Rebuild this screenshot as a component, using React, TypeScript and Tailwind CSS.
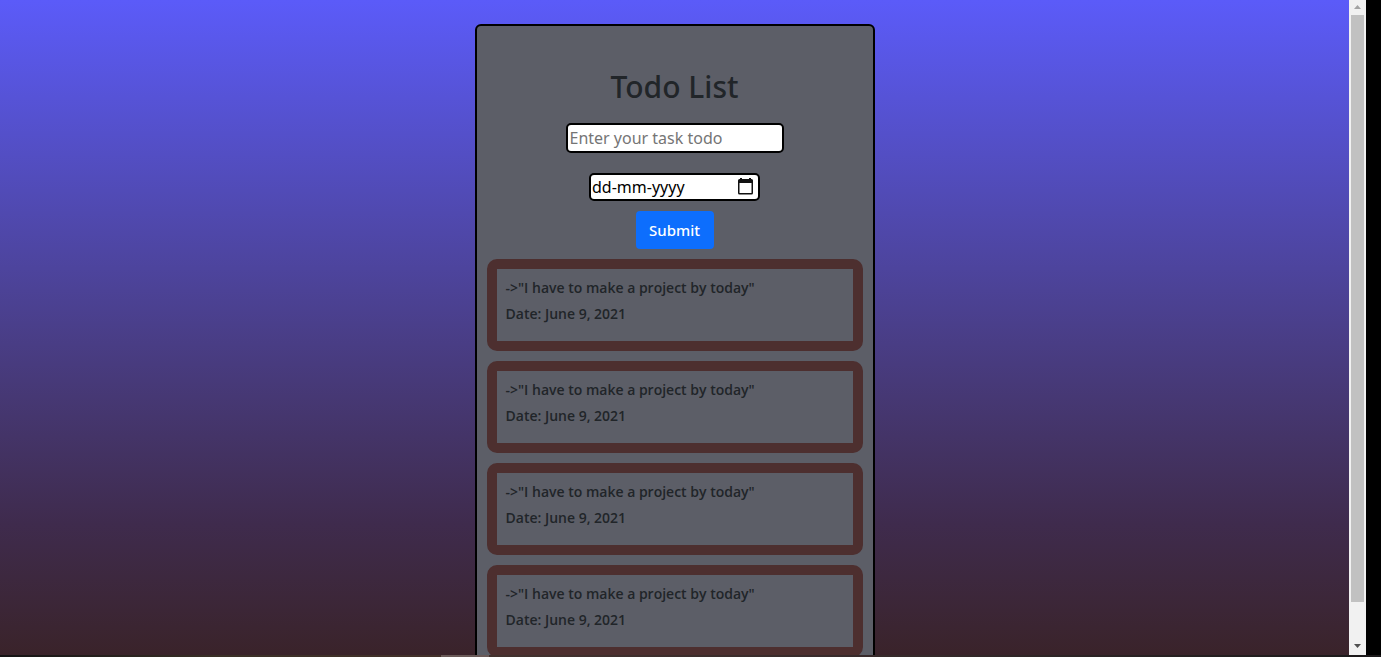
import { useState } from 'react';

type Todo = { id: number; task: string; date: string };

const todos: Todo[] = [1, 2, 3, 4].map((id) => ({
  id,
  task: 'I have to make a project by today',
  date: 'June 9, 2021',
}));

function CalendarIcon() {
  return (
    <svg viewBox="0 0 15 17" className="h-[17px] w-[15px]" aria-hidden="true">
      <path d="M2 0h2v2H2zM11 0h2v2h-2z" fill="#111" />
      <path d="M1.500 1h12A1.500 1.500 0 0 1 15 2.500v12.500a1.500 1.500 0 0 1-1.500 1.500h-12A1.500 1.500 0 0 1 0 15V2.500A1.500 1.500 0 0 1 1.500 1zM1.500 5v10h12V5z" fill="#111" fillRule="evenodd" />
    </svg>
  );
}

function TodoItem({ todo }: { todo: Todo }) {
  return (
    <li className="h-[92px] shrink-0 rounded-[10px] border-10 border-[#4d2f2f] px-[9px] py-1.5 font-['Open_Sans',sans-serif] text-[14px] leading-[26px] font-semibold text-[#212529]">
      <p>-&gt;"{todo.task}"</p>
      <p>Date: {todo.date}</p>
    </li>
  );
}

function ScrollRail() {
  return (
    <div className="flex w-[17px] shrink-0 flex-col items-center bg-[#f1f1f1]" aria-hidden="true">
      <svg viewBox="0 0 17 15" className="h-[15px] w-[17px] shrink-0">
        <path d="M5 9h7L8.500 5z" fill="#a3a3a3" />
      </svg>
      <div className="w-[13px] grow bg-[#c1c1c1]" />
      <div className="h-9 shrink-0" />
      <svg viewBox="0 0 17 17" className="h-[17px] w-[17px] shrink-0">
        <path d="M5 6h7L8.500 10z" fill="#505050" />
      </svg>
    </div>
  );
}

export default function App() {
  const [task, setTask] = useState('');
  const [date, setDate] = useState('');

  return (
    <div className="flex h-screen flex-col overflow-hidden bg-black font-['Noto_Sans',sans-serif]">
      <div className="flex min-h-0 grow pr-[15px]">
        <main className="min-w-0 grow overflow-hidden bg-linear-to-b from-[#5b5bf9] via-[#3f2b4d] via-80% to-[#3a232a] pt-6">
          <section className="mx-auto flex w-full max-w-[400px] flex-col rounded-md border-2 border-black bg-[#5c5e67] px-2.5 pt-10 pb-2.5">
            <h1 className="mb-[15px] text-center text-[30px] leading-[42px] font-medium text-[#212529]">Todo List</h1>
            <form className="flex flex-col items-center" onSubmit={(e) => e.preventDefault()}>
              <input
                type="text"
                aria-label="Task"
                placeholder="Enter your task todo"
                value={task}
                onChange={(e) => setTask(e.target.value)}
                className="mb-5 h-[30px] w-[218px] rounded-[5px] border-2 border-black bg-white px-0.5 text-base text-black placeholder:text-[#757575]"
              />
              <div className="mb-2.5 flex h-7 w-[171px] items-center rounded-[5px] border-2 border-black bg-white pr-[5px] pl-px">
                <input
                  type="text"
                  aria-label="Due date"
                  placeholder="dd-mm-yyyy"
                  value={date}
                  onChange={(e) => setDate(e.target.value)}
                  className="h-6 min-w-0 grow text-base text-black outline-none placeholder:text-black"
                />
                <button type="button" aria-label="Open calendar" className="pb-0.5">
                  <CalendarIcon />
                </button>
              </div>
              <button type="submit" className="mb-2.5 h-[38px] w-[78px] rounded bg-[#0d6efd] text-[15px] font-medium text-white">
                Submit
              </button>
            </form>
            <ul className="flex flex-col gap-2.5">
              {todos.map((todo) => (
                <TodoItem key={todo.id} todo={todo} />
              ))}
            </ul>
          </section>
        </main>
        <ScrollRail />
      </div>
      <div className="flex h-0.5 shrink-0" aria-hidden="true">
        <div className="w-[441px] bg-linear-to-r from-[#151314] via-[#3b3027] to-[#43302a]" />
        <div className="w-12 bg-[#6a5a58]" />
        <div className="grow bg-linear-to-r from-[#43322e] via-[#35292a] to-[#1b191a]" />
      </div>
    </div>
  );
}
